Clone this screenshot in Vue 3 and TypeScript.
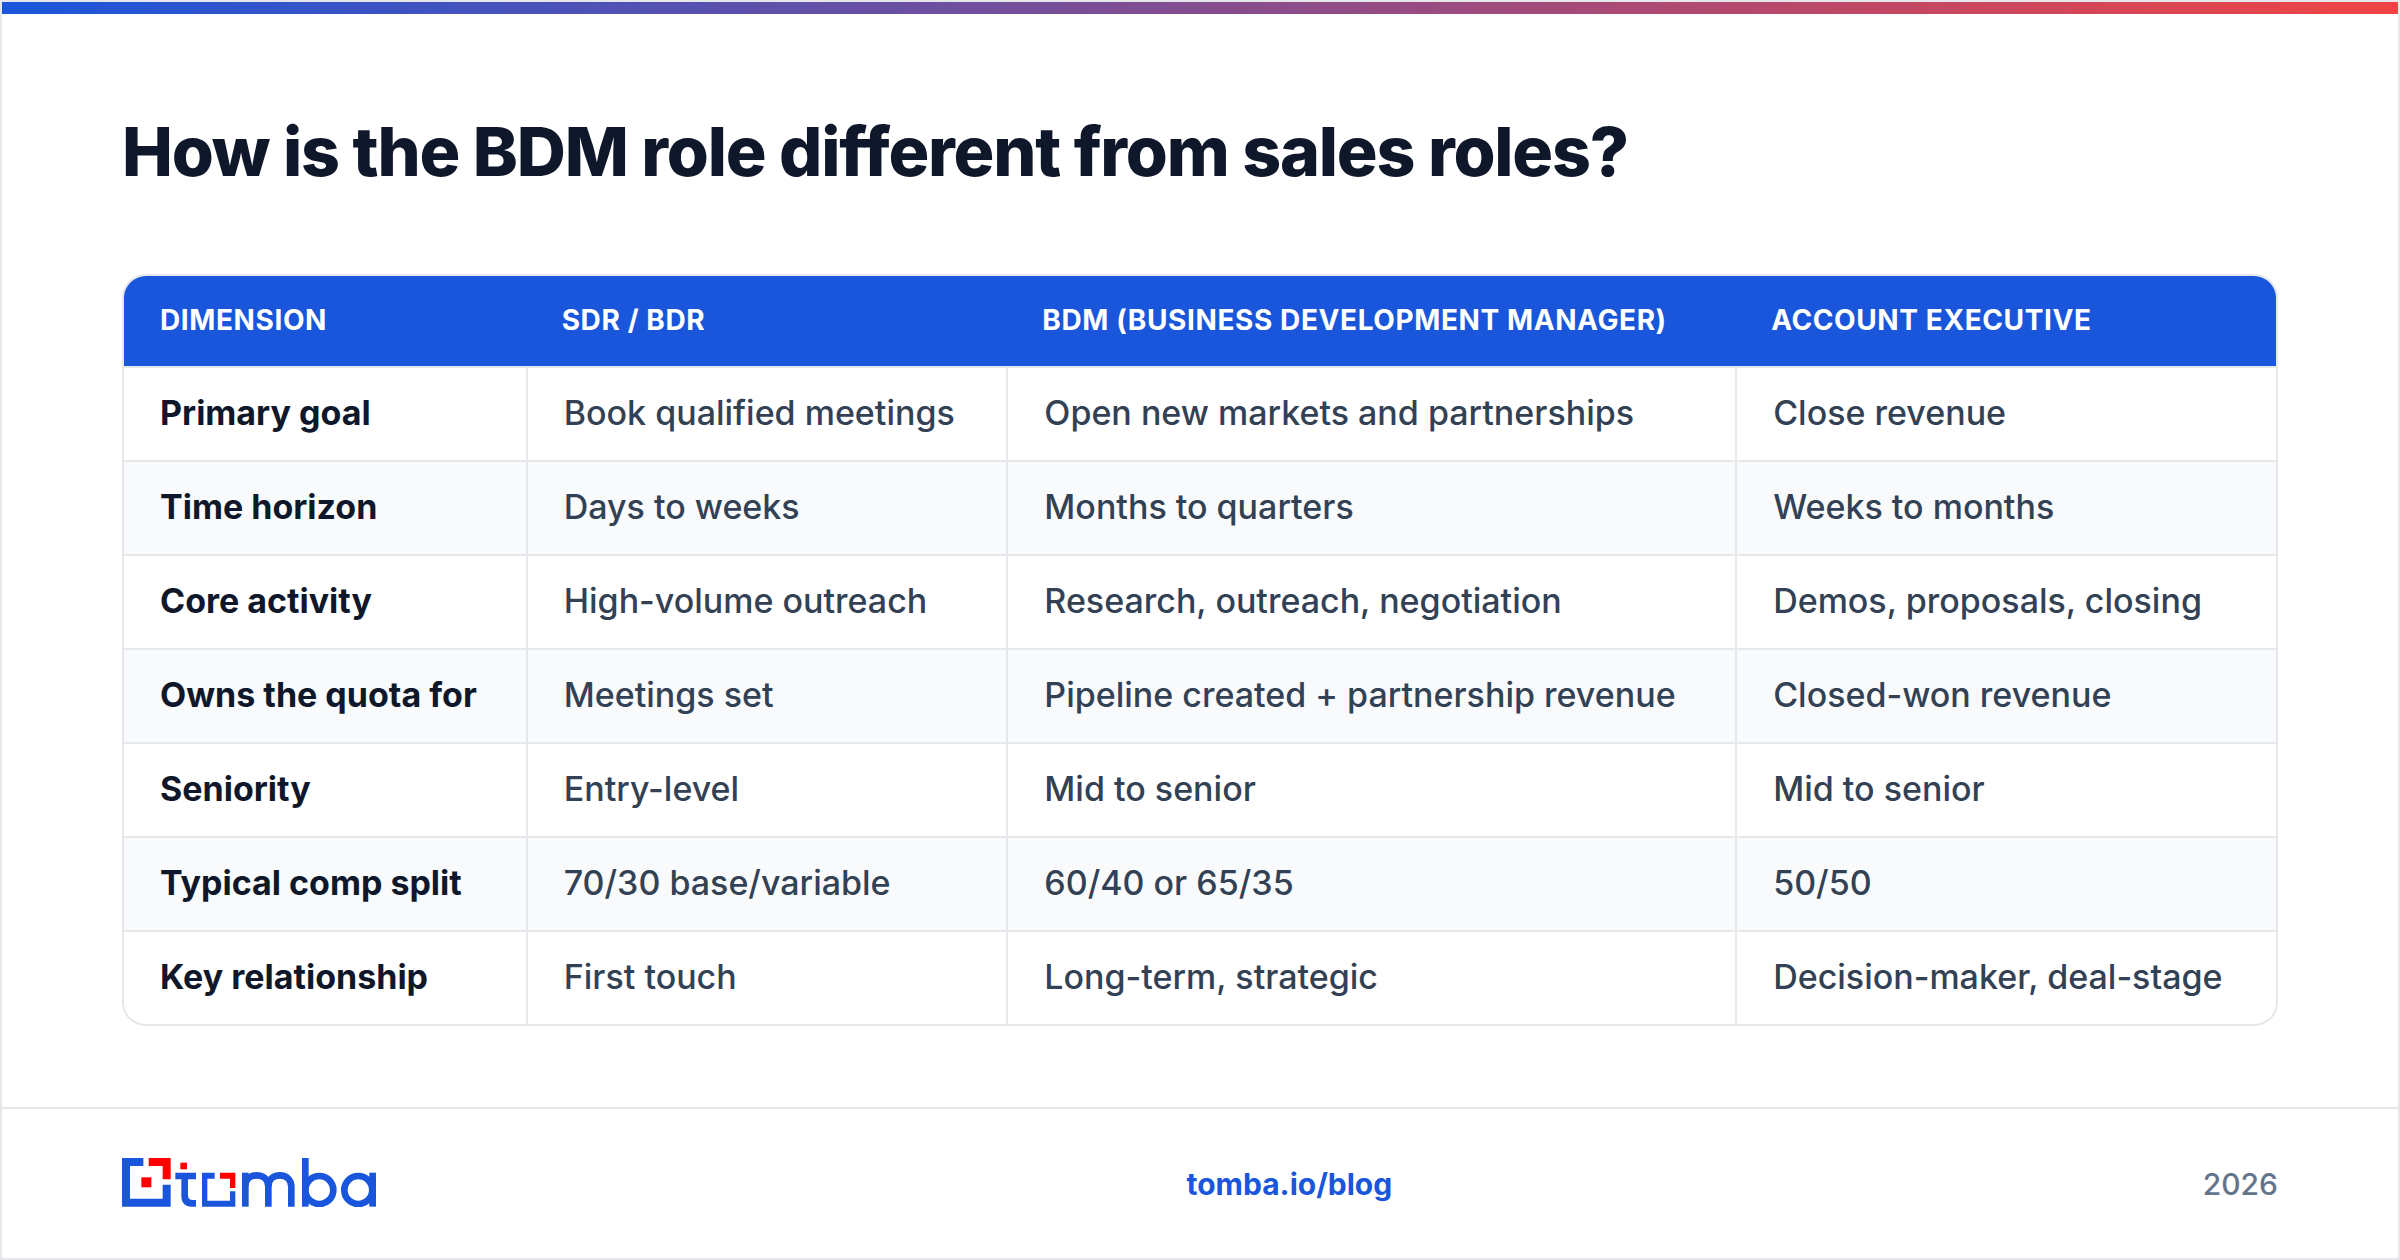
<template>
  <div class="frame">
    <div class="accent"></div>
    <main class="content">
      <h1>How is the BDM role different from sales roles?</h1>
      <div class="table-wrap">
        <table>
          <thead>
            <tr>
              <th v-for="col in columns" :key="col">{{ col }}</th>
            </tr>
          </thead>
          <tbody>
            <tr v-for="row in rows" :key="row[0]">
              <td v-for="(cell, i) in row" :key="i">{{ cell }}</td>
            </tr>
          </tbody>
        </table>
      </div>
    </main>
    <footer>
      <svg class="logo" viewBox="126 174 762 146" role="img" aria-label="tomba">
        <path class="blue" d="M190 174H126V320H272V254H248V296H150V198H190Z" />
        <path class="red" d="M206 174H272V238H248V198H206Z" />
        <rect class="red" x="184" y="232" width="30" height="30" />
        <rect class="red" x="301" y="188" width="20" height="20" />
        <path class="blue" d="M286 218H348V238H324V286C324 296 329 300 338 300H348V320H336C314 320 304 308 304 288V238H286Z" />
        <path class="blue" d="M404 218H366V320H466V274H450V302H382V236H404Z" />
        <path class="red" d="M420 218H466V264H450V236H420Z" />
        <g class="stroke">
          <path d="M496 320V218" />
          <path d="M496 258C496 238 510 226 530 226C551 226 565 240 565 260V320" />
          <path d="M565 260C565 240 579 226 600 226C620 226 634 240 634 260V320" />
          <path d="M676 174V320" />
          <circle cx="718" cy="270" r="42" />
          <circle cx="835" cy="270" r="42" />
          <path d="M878 218V320" />
        </g>
      </svg>
      <span class="link">tomba.io/blog</span>
      <span class="year">2026</span>
    </footer>
  </div>
</template>

<script setup lang="ts">
const columns = ['Dimension', 'SDR / BDR', 'BDM (Business Development Manager)', 'Account Executive']

const rows: string[][] = [
  ['Primary goal', 'Book qualified meetings', 'Open new markets and partnerships', 'Close revenue'],
  ['Time horizon', 'Days to weeks', 'Months to quarters', 'Weeks to months'],
  ['Core activity', 'High-volume outreach', 'Research, outreach, negotiation', 'Demos, proposals, closing'],
  ['Owns the quota for', 'Meetings set', 'Pipeline created + partnership revenue', 'Closed-won revenue'],
  ['Seniority', 'Entry-level', 'Mid to senior', 'Mid to senior'],
  ['Typical comp split', '70/30 base/variable', '60/40 or 65/35', '50/50'],
  ['Key relationship', 'First touch', 'Long-term, strategic', 'Decision-maker, deal-stage'],
]
</script>

<style>
body {
  margin: 0;
  background: #fff;
}
</style>

<style scoped>
.frame {
  width: 2400px;
  height: 1260px;
  box-sizing: border-box;
  border: 2px solid #e5e7eb;
  display: flex;
  flex-direction: column;
  font-family: Inter, "Noto Sans", sans-serif;
  background: #fff;
}

.accent {
  height: 12px;
  background: linear-gradient(90deg, #1a56db, #ef4444);
}

.content {
  flex: 1;
  padding: 97px 120px 0;
}

h1 {
  margin: 0 0 83px;
  font-size: 68px;
  line-height: 80px;
  font-weight: 800;
  letter-spacing: -1.2px;
  color: #0f172a;
}

.table-wrap {
  border: 2px solid #e5e7eb;
  border-radius: 24px;
  overflow: hidden;
}

table {
  width: 100%;
  border-collapse: separate;
  border-spacing: 0;
}

th {
  padding: 24px 36px 26px;
  background: #1a56db;
  color: #fff;
  font-size: 28px;
  line-height: 40px;
  font-weight: 700;
  letter-spacing: 0.6px;
  text-align: left;
  text-transform: uppercase;
}

td {
  padding: 23px 36px 25px;
  font-size: 34px;
  line-height: 44px;
  font-weight: 500;
  color: #334155;
  border-top: 2px solid #e5e7eb;
}

td + td {
  border-left: 2px solid #e5e7eb;
}

td:first-child {
  font-weight: 700;
  color: #0f172a;
}

tbody tr:nth-child(even) {
  background: #f8fafc;
}

footer {
  height: 151px;
  box-sizing: border-box;
  padding: 0 120px;
  border-top: 2px solid #e5e7eb;
  display: flex;
  align-items: center;
  justify-content: space-between;
}

.logo {
  width: 254px;
  height: 48.67px;
  margin-top: -2px;
}

.blue {
  fill: #1a56db;
}

.red {
  fill: #ff0000;
}

.stroke {
  fill: none;
  stroke: #1a56db;
  stroke-width: 20;
}

.link {
  font-size: 30px;
  font-weight: 700;
  color: #1a56db;
}

.year {
  font-size: 30px;
  font-weight: 500;
  color: #64748b;
}
</style>
